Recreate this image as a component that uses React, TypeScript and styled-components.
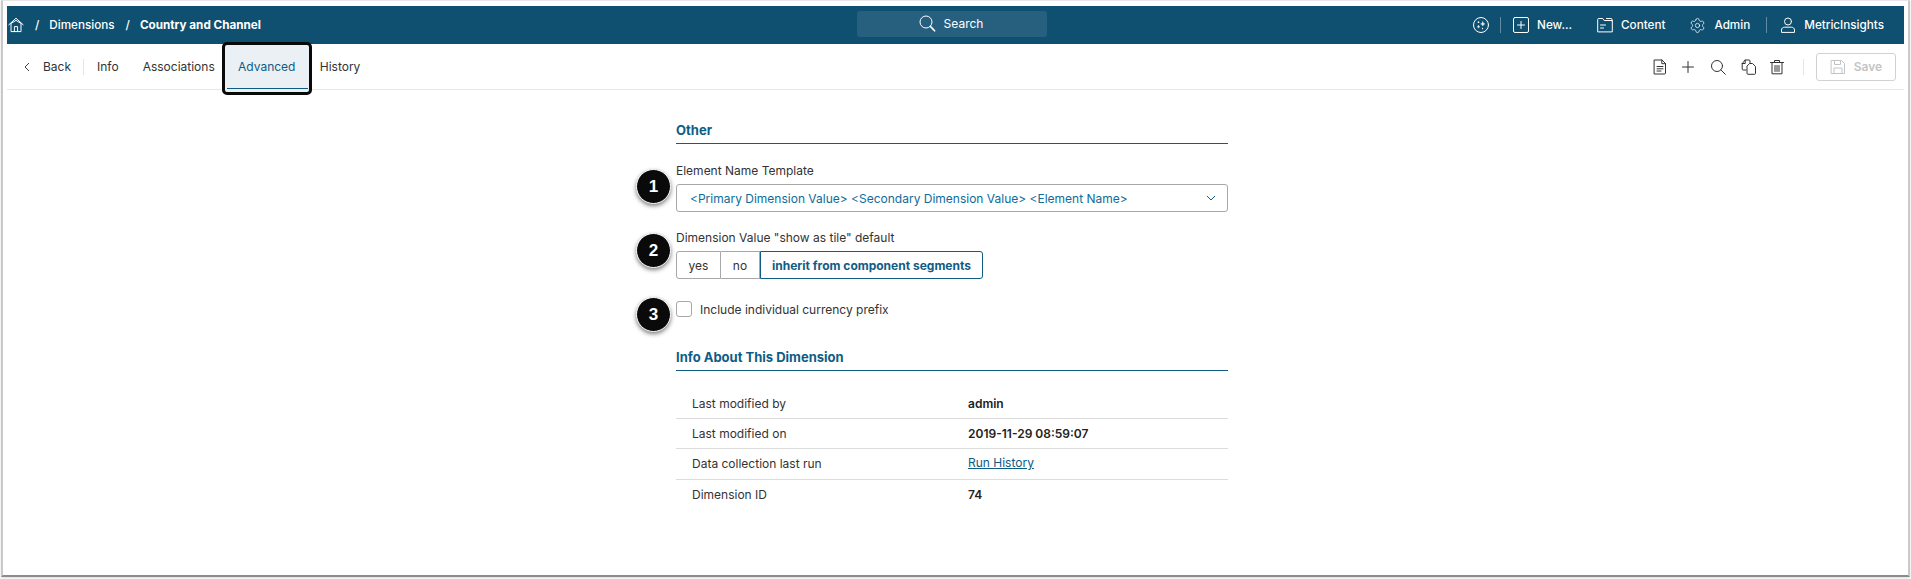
import React from "react";
import styled, { createGlobalStyle } from "styled-components";
import { Settings } from "lucide-react";

const Global = createGlobalStyle`
  html, body { margin: 0; padding: 0; background: #fff; }
  body { font-family: Inter, "Liberation Sans", sans-serif; overflow: hidden; }
  * { box-sizing: border-box; }
`;

const Window = styled.div`
  width: 1911px; height: 579px; background: #fff; padding: 0 1px 0 1px;
`;
const Frame = styled.div`
  height: 577px; background: #fff;
  border-top: 1px solid #e6e6e6;
  border-left: 2px solid #c9c9c9;
  border-right: 2px solid #c9c9c9;
  border-bottom: 2px solid #8c8c8c;
  box-shadow: 0 1px 2px rgba(0,0,0,.15);
  padding: 5px 4px 0 4px;
  display: flex; flex-direction: column;
`;
const Nav = styled.header`
  height: 38px; background: #0f4f70; color: #fff; display: flex; align-items: center;
  position: relative; font-size: 11.7px; font-weight: 500; padding-left: 1px; flex: none;
`;
const Crumbs = styled.div`display: flex; align-items: center; flex: none;`;
const CrumbSep = styled.span`margin: 0 10px 0 11px; font-weight: 500;`;
const Strong = styled.span`font-weight: 700;`;
const Search = styled.div`
  position: absolute; left: 850px; top: 5px; width: 190px; height: 26px; border-radius: 3px;
  background: rgba(255,255,255,.1); display: flex; align-items: center; justify-content: center; gap: 8px;
  font-weight: 400; font-size: 12px; padding-right: 2px; padding-bottom: 1px;
`;
const NavRight = styled.div`margin-left: auto; display: flex; align-items: center; padding-right: 20px;`;
const NavItem = styled.div<{ $ml?: number }>`
  display: flex; align-items: center; gap: 8px; margin-left: ${p => p.$ml ?? 0}px; white-space: nowrap;
`;
const NavSep = styled.span<{ $ml: number }>`
  width: 1px; height: 16px; background: rgba(255,255,255,.35); margin-left: ${p => p.$ml}px;
`;
const Bar = styled.div`
  height: 46px; border-bottom: 1px solid #e8e8e8; display: flex; align-items: center; font-size: 12px; color: #333;
  flex: none; position: relative;
`;
const BackBtn = styled.div`display: flex; align-items: center; gap: 13px; padding-left: 17px;`;
const BarSep = styled.span<{ $ml: number }>`width: 1px; height: 16px; background: #e5e5e5; margin-left: ${p => p.$ml}px;`;
const Tab = styled.div<{ $ml: number }>`margin-left: ${p => p.$ml}px; white-space: nowrap;`;
const ActiveTab = styled.div`
  position: relative; margin-left: 7px; width: 90px; height: 53px; margin-top: 4px; flex: none;
  border: 3px solid #0a0a0a; border-radius: 5px; background: #eaf0f4; color: #0f5c85;
  display: flex; align-items: center; justify-content: center; padding-bottom: 4px; z-index: 2;
  &::after { content: ""; position: absolute; left: 2px; right: 1px; bottom: 3px; height: 1px; background: #0f5c85; }
`;
const Tools = styled.div`margin-left: auto; display: flex; align-items: center; padding-right: 8px;`;
const ToolIcon = styled.span<{ $ml: number }>`display: inline-flex; margin-left: ${p => p.$ml}px; color: #333;`;
const SaveBtn = styled.div`
  width: 80px; height: 28px; margin-left: 12px; border: 1px solid #d2d2d2; border-radius: 3px; color: #c4c4c4;
  display: flex; align-items: center; justify-content: center; gap: 8px; font-weight: 600; font-size: 12px;
`;
const Main = styled.main`width: 552px; margin-left: 669px; position: relative; font-size: 12px; color: #333;`;
const SectionTitle = styled.h2<{ $mt: number }>`
  margin: ${p => p.$mt}px 0 0; height: 28px; font-size: 13px; font-weight: 700; color: #0f5c85; line-height: 18px;
  padding-top: 5px; border-bottom: 1px solid #0f5c85;
`;
const Label = styled.div`line-height: 14px;`;
const Field = styled.div<{ $mt: number }>`margin-top: ${p => p.$mt}px; position: relative;`;
const Select = styled.div`
  margin-top: 6px; height: 28px; border: 1px solid #a8a8a8; border-radius: 3px; color: #0f6b99; padding: 0 11px 0 13px;
  display: flex; align-items: center; justify-content: space-between; font-size: 12px;
`;
const Segments = styled.div`display: flex; margin-top: 6px; height: 28px;`;
const Segment = styled.div<{ $w: number; $active?: boolean; $first?: boolean }>`
  width: ${p => p.$w}px; display: flex; align-items: center; justify-content: center;
  border: 1px solid ${p => (p.$active ? "#0f5c85" : "#a8a8a8")};
  border-left-width: ${p => (p.$first || p.$active ? 1 : 0)}px;
  border-radius: ${p => (p.$first ? "3px 0 0 3px" : p.$active ? "0 3px 3px 0" : "0")};
  color: ${p => (p.$active ? "#0f5c85" : "#333")}; font-weight: ${p => (p.$active ? 700 : 400)};
`;
const CheckRow = styled.label`display: flex; align-items: center; gap: 8px; height: 16px;`;
const Check = styled.span`width: 16px; height: 16px; border: 1px solid #a8a8a8; border-radius: 3px; background: #fff;`;
const Table = styled.div`margin-top: 18px;`;
const Row = styled.div<{ $last?: boolean }>`
  display: grid; grid-template-columns: 276px 1fr; height: 30.2px; align-items: center; padding-left: 16px;
  border-bottom: ${p => (p.$last ? "0" : "1px solid #dcdcdc")};
`;
const Value = styled.span`font-weight: 600; color: #222;`;
const Link = styled.a`color: #0f5c85; text-decoration: underline; display: inline-block; margin-bottom: 2px;`;
const Badge = styled.span<{ $top: number }>`
  position: absolute; left: -40px; top: ${p => p.$top}px; width: 35px; height: 35px; border-radius: 50%;
  background: #0a0a0a; color: #fff; display: flex; align-items: center; justify-content: center;
  font-family: "Liberation Sans", sans-serif; font-weight: 700; font-size: 17px;
  border: 1px solid #fff; box-shadow: 0 2px 4px rgba(0,0,0,.5);
`;

const Svg = ({ s = 16, w = 1, children }: { s?: number; w?: number; children: React.ReactNode }) => (
  <svg width={s} height={s} viewBox="0 0 16 16" fill="none" stroke="currentColor" strokeWidth={w} strokeLinecap="round" strokeLinejoin="round">{children}</svg>
);
const HomeIcon = () => <Svg><path d="M.8 7.8 8 1.2l7.2 6.6M2.8 6.6 8 3.4l5.2 3.2M3 7v7.6h10V7M6.4 14.6V9.6h3.2v5" /></Svg>;
const SearchIcon = () => <svg width="17" height="17" viewBox="0 0 17 17" fill="none" stroke="currentColor"><circle cx="7" cy="7" r="6" /><path d="m11.4 11.4 4.2 4.4" strokeWidth="1.6" strokeLinecap="round" /></svg>;

const App = () => (
  <Window>
    <Global />
    <Frame>
      <Nav>
        <Crumbs>
          <HomeIcon />
          <CrumbSep>/</CrumbSep>
          <span>Dimensions</span>
          <CrumbSep>/</CrumbSep>
          <Strong>Country and Channel</Strong>
        </Crumbs>
        <Search><SearchIcon />Search</Search>
        <NavRight>
          <NavItem>
            <Svg><circle cx="8" cy="8" r="7.5" /><path d="m9.800 4.800.5 1.600 1.600.5-1.600.5-.5 1.600-.5-1.600-1.600-.5 1.600-.5zM5.500 8.500l.3 1 1 .3-1 .3-.3 1-.3-1-1-.3 1-.3z" fill="currentColor" strokeWidth=".5" /><circle cx="5.500" cy="5.200" r=".9" fill="currentColor" stroke="none" /><circle cx="9.500" cy="11.500" r=".7" fill="currentColor" stroke="none" /></Svg>
          </NavItem>
          <NavSep $ml={11} />
          <NavItem $ml={12}>
            <Svg><rect x=".5" y=".5" width="15" height="15" rx="1.5" /><path d="M8 4.500v7M4.500 8h7" /></Svg>
            <span>New...</span>
          </NavItem>
          <NavItem $ml={25}>
            <Svg><path d="M.7 14.500V2.500a1 1 0 0 1 1-1h4l1.500 2H15.300v11zM9.500 1.500h4.500a1 1 0 0 1 1 1V4M3.500 8h5M3.500 11h3" /></Svg>
            <span>Content</span>
          </NavItem>
          <NavItem $ml={24}>
            <Settings size={17} strokeWidth={1.05} />
            <span>Admin</span>
          </NavItem>
          <NavSep $ml={16} />
          <NavItem $ml={13}>
            <Svg><circle cx="8" cy="4.500" r="3.500" /><path d="M1.500 15v-2c0-1.500 1.300-2.800 3-2.800h7c1.700 0 3 1.300 3 2.800v2z" /></Svg>
            <span>MetricInsights</span>
          </NavItem>
        </NavRight>
      </Nav>
      <Bar>
        <BackBtn>
          <svg width="6" height="10" viewBox="0 0 6 10" fill="none" stroke="#444"><path d="M5 1 1 5l4 4" /></svg>
          <span>Back</span>
        </BackBtn>
        <BarSep $ml={12} />
        <Tab $ml={13}>Info</Tab>
        <Tab $ml={24}>Associations</Tab>
        <ActiveTab>Advanced</ActiveTab>
        <Tab $ml={8}>History</Tab>
        <Tools>
          <ToolIcon $ml={0}><Svg><path d="M2.500 1h7.500l3.500 3.500v9.500a1 1 0 0 1-1 1h-10z M9.800 1v3.700h3.700M5 7.500h6M5 9.800h6M5 12h4" /></Svg></ToolIcon>
          <ToolIcon $ml={12}><Svg><path d="M8 2.500v11M2.500 8h11" /></Svg></ToolIcon>
          <ToolIcon $ml={14}><Svg><circle cx="7" cy="7" r="5.500" /><path d="m11 11 4.300 4.300" /></Svg></ToolIcon>
          <ToolIcon $ml={15}><Svg><path d="M5 11H2.200a1 1 0 0 1-1-1V4.500L4.200 1H8a1 1 0 0 1 1 1v2.500" /><path d="M4.200 1v3.500H1.200" /><path d="M9 4.500h2.500l3 3v6.800a1 1 0 0 1-1 1H7a1 1 0 0 1-1-1V7.500z" /></Svg></ToolIcon>
          <ToolIcon $ml={12}><Svg><path d="M1.500 3.500h13M5.500 3.500V1.500h5v2M3 3.500v11.300h10V3.500M6 6.500v6M8 6.500v6M10 6.500v6" /></Svg></ToolIcon>
          <BarSep $ml={18} />
          <SaveBtn>
            <Svg><path d="M1.500 1.500h10l3 3v10h-13zM4.500 1.500v4h6v-4M4 14.500v-5.500h8v5.500" /></Svg>
            <span>Save</span>
          </SaveBtn>
        </Tools>
      </Bar>
      <Main>
        <SectionTitle $mt={26}>Other</SectionTitle>
        <Field $mt={20}>
          <Badge $top={5}>1</Badge>
          <Label>Element Name Template</Label>
          <Select>
            <span>&lt;Primary Dimension Value&gt; &lt;Secondary Dimension Value&gt; &lt;Element Name&gt;</span>
            <svg width="10" height="6" viewBox="0 0 10 6" fill="none" stroke="#0f5c85"><path d="m1 1 4 4 4-4" /></svg>
          </Select>
        </Field>
        <Field $mt={19}>
          <Badge $top={2}>2</Badge>
          <Label>Dimension Value "show as tile" default</Label>
          <Segments>
            <Segment $w={45} $first>yes</Segment>
            <Segment $w={39}>no</Segment>
            <Segment $w={223} $active>inherit from component segments</Segment>
          </Segments>
        </Field>
        <Field $mt={22}>
          <Badge $top={-4}>3</Badge>
          <CheckRow><Check /><span>Include individual currency prefix</span></CheckRow>
        </Field>
        <SectionTitle $mt={26}>Info About This Dimension</SectionTitle>
        <Table>
          <Row><span>Last modified by</span><Value>admin</Value></Row>
          <Row><span>Last modified on</span><Value>2019-11-29 08:59:07</Value></Row>
          <Row><span>Data collection last run</span><span><Link>Run History</Link></span></Row>
          <Row $last><span>Dimension ID</span><Value>74</Value></Row>
        </Table>
      </Main>
    </Frame>
  </Window>
);

export default App;
